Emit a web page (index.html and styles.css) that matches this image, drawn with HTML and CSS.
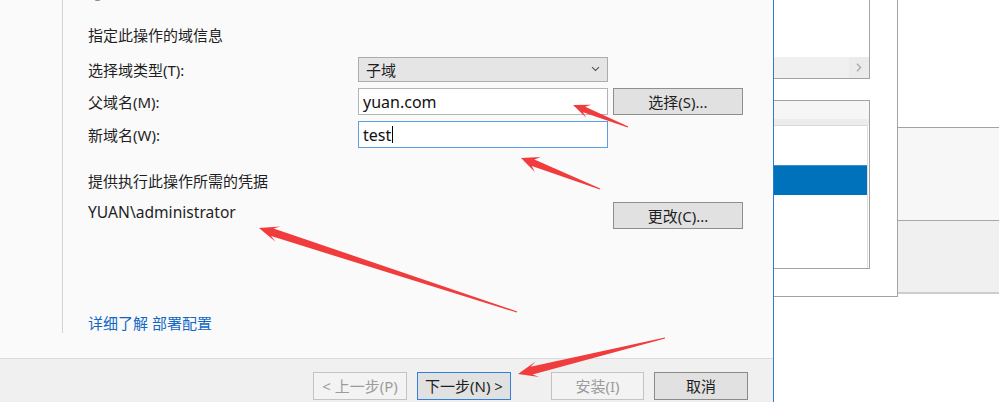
FILE: index.html
```html
<!DOCTYPE html>
<html lang="zh-CN">
<head>
<meta charset="utf-8">
<title>Active Directory 域服务配置向导</title>
<link rel="stylesheet" href="styles.css">
</head>
<body>
<div class="screen">
  <div class="dialog">
    <div class="main">
      <div class="upper">
        <div class="nav"></div>
        <div class="content">
          <div class="fragment"><div class="fragment-line"><span class="radio"></span><span>添加新林(F)</span></div></div>
          <div class="heading">指定此操作的域信息</div>
          <div class="form">
            <div class="label">选择域类型(T):</div>
            <div class="combo"><span>子域</span><svg class="chev" width="9" height="6" viewBox="0 0 9 6"><path d="M1 1.2l3.5 3.3 3.5-3.3" fill="none" stroke="#555" stroke-width="1.1"/></svg></div>
            <div class="spacer"></div>
            <div class="label">父域名(M):</div>
            <div class="input">yuan.com</div>
            <button class="btn">选择(S)...</button>
            <div class="label">新域名(W):</div>
            <div class="input focus">test<span class="caret"></span></div>
            <div class="spacer"></div>
          </div>
          <div class="heading creds">提供执行此操作所需的凭据</div>
          <div class="cred-row">
            <div class="cred-user">YUAN\administrator</div>
            <button class="btn">更改(C)...</button>
          </div>
          <a class="link" href="#">详细了解 部署配置</a>
        </div>
      </div>
    </div>
    <div class="footer">
      <button class="fbtn disabled">&lt; 上一步(P)</button>
      <button class="fbtn primary">下一步(N) &gt;</button>
      <button class="fbtn disabled install">安装(I)</button>
      <button class="fbtn cancel">取消</button>
    </div>
  </div>
  <div class="backdrop">
    <div class="bg-left">
      <div class="panel1">
        <div class="panel1-body"></div>
        <div class="hscroll"><span class="hs-arrow"><svg width="6" height="9" viewBox="0 0 6 9"><path d="M1 0.8l3.6 3.7L1 8.2" fill="none" stroke="#a8a8a8" stroke-width="1.3"/></svg></span></div>
      </div>
      <div class="panel2">
        <div class="p2-head"></div>
        <div class="p2-band"></div>
        <div class="p2-list">
          <div class="p2-gap"></div>
          <div class="p2-sel"></div>
        </div>
      </div>
    </div>
    <div class="bg-right">
      <div class="band-white"></div>
      <div class="band-light"></div>
      <div class="band-grey"></div>
      <div class="band-bottom"></div>
    </div>
  </div>
  <svg class="arrows" width="999" height="402" viewBox="0 0 999 402">
    <g fill="#f03c3c">
      <polygon points="573,105 591.4,104.8 585.2,106.7 628.2,126.5 627.8,127.5 583.0,112.3 586.2,117.8"/>
      <polygon points="521,158 540.7,157.1 534.4,159.4 600.2,188.5 599.8,189.5 531.8,166.0 534.9,172.0"/>
      <polygon points="259,228 280.5,226.6 273.6,228.5 517.2,311.5 516.8,312.5 271.1,236.1 275.5,241.8"/>
      <polygon points="518,374 535.5,361.4 530.6,366.8 664.9,337.5 665.1,338.5 532.6,374.6 539.3,377.0"/>
    </g>
  </svg>
</div>
</body>
</html>
```
FILE: styles.css
```css
* { box-sizing: border-box; }
html, body { margin: 0; padding: 0; }
body {
  width: 999px;
  height: 402px;
  overflow: hidden;
  background: #ffffff;
  font-family: "Noto Sans", "Noto Sans CJK SC", sans-serif;
  font-size: 15px;
  line-height: 20px;
  color: #1f1f1f;
}
.screen {
  position: relative;
  display: flex;
  width: 999px;
  height: 402px;
}
.dialog {
  width: 774px;
  height: 402px;
  display: flex;
  flex-direction: column;
  border-right: 1px solid #2b7bd3;
  background: #fafafa;
}
.main {
  height: 358px;
  display: flex;
  flex-direction: column;
}
.upper {
  height: 333px;
  display: flex;
}
.nav {
  width: 63px;
  border-right: 1px solid #d2d2d2;
}
.content {
  flex: 1;
  display: flex;
  flex-direction: column;
  padding-left: 25px;
}
.fragment {
  height: 2px;
  overflow: hidden;
}
.fragment-line {
  margin-top: -19px;
  display: flex;
  align-items: flex-end;
  gap: 6px;
  height: 20px;
  color: #555;
}
.radio {
  width: 13px;
  height: 13px;
  border: 1px solid #777;
  border-radius: 50%;
  margin-bottom: 0;
  margin-left: 3px;
}
.heading {
  margin-top: 23px;
}
.form {
  margin-top: 12px;
  display: grid;
  grid-template-columns: 270px 250px 135px;
  grid-template-rows: 25px 27px 27px;
  row-gap: 6px;
}
.label {
  align-self: center;
}
.combo {
  background: #e5e5e5;
  border: 1px solid #acacac;
  display: flex;
  align-items: center;
  justify-content: space-between;
  padding: 0 7px 0 7px;
}
.chev { margin-top: -2px; }
.input {
  background: #ffffff;
  border: 1px solid #b4b4b4;
  display: flex;
  align-items: center;
  padding-left: 4px;
  font-size: 16px;
  color: #111;
}
.input.focus {
  border-color: #5a9ee3;
}
.caret {
  display: inline-block;
  width: 1px;
  height: 17px;
  background: #000;
  margin-left: 1px;
}
.btn {
  font: inherit;
  color: #1f1f1f;
  background: #e1e1e1;
  border: 1px solid #8e8e8e;
  padding: 0;
  height: 27px;
  width: 130px;
  margin-left: 5px;
}
.creds {
  margin-top: 23px;
}
.cred-row {
  margin-top: 11px;
  display: grid;
  grid-template-columns: 520px 135px;
  align-items: start;
}
.cred-user {
  font-size: 15.6px;
}
.link {
  margin-top: auto;
  color: #1267c3;
  text-decoration: none;
  align-self: flex-start;
}
.footer {
  height: 44px;
  border-top: 1px solid #dcdcdc;
  background: #f0f0f0;
  display: flex;
  align-items: flex-start;
  padding: 13px 0 0 313px;
  gap: 10px;
}
.fbtn {
  font: inherit;
  width: 94px;
  height: 28px;
  padding: 0;
  background: #e1e1e1;
  border: 1px solid #8a8a8a;
  color: #1f1f1f;
}
.fbtn.disabled {
  background: #f3f3f3;
  border-color: #c3c3c3;
  color: #9c9c9c;
}
.fbtn.primary {
  border-color: #2f80d8;
  background: #e1e1e1;
}
.fbtn.install {
  margin-left: 30px;
  width: 93px;
}
.backdrop {
  flex: 1;
  display: flex;
  align-items: flex-start;
}
.bg-left {
  width: 124px;
  height: 297px;
  border-right: 1px solid #a3a3a3;
  border-bottom: 1px solid #a3a3a3;
  background: #ffffff;
  display: flex;
  flex-direction: column;
}
.panel1 {
  width: 96px;
  height: 79px;
  border-right: 1px solid #a3a3a3;
  border-bottom: 1px solid #a3a3a3;
  display: flex;
  flex-direction: column;
}
.panel1-body { flex: 1; }
.hscroll {
  height: 21px;
  background: #f0f0f0;
  display: flex;
  justify-content: flex-end;
}
.hs-arrow {
  width: 20px;
  display: flex;
  align-items: center;
  justify-content: center;
  background: #ebebeb;
}
.panel2 {
  margin-top: 21px;
  width: 96px;
  height: 169px;
  border-top: 1px solid #a3a3a3;
  border-right: 1px solid #a3a3a3;
  border-bottom: 1px solid #a3a3a3;
  display: flex;
  flex-direction: column;
}
.p2-head {
  height: 18px;
  background: #f6f6f6;
}
.p2-band {
  height: 6px;
  background: #ececec;
}
.p2-list {
  flex: 1;
  background: #ffffff;
  border-top: 1px solid #d8d8d8;
  border-right: 1px solid #dedede;
  margin-right: 1px;
}
.p2-gap { height: 39px; }
.p2-sel {
  height: 30px;
  background: #0071bb;
  border-top: 1px solid #3b8fd0;
}
.bg-right {
  flex: 1;
  display: flex;
  flex-direction: column;
}
.band-white {
  height: 128px;
  background: #ffffff;
  border-bottom: 1px solid #a3a3a3;
}
.band-light {
  height: 93px;
  background: #f7f7f7;
  border-bottom: 1px solid #a8a8a8;
}
.band-grey {
  height: 73px;
  background: #f0f0f0;
  border-bottom: 2px solid #cdcdcd;
}
.band-bottom {
  flex: 1;
  background: #ffffff;
}
.arrows {
  position: absolute;
  left: 0;
  top: 0;
  pointer-events: none;
}
```
